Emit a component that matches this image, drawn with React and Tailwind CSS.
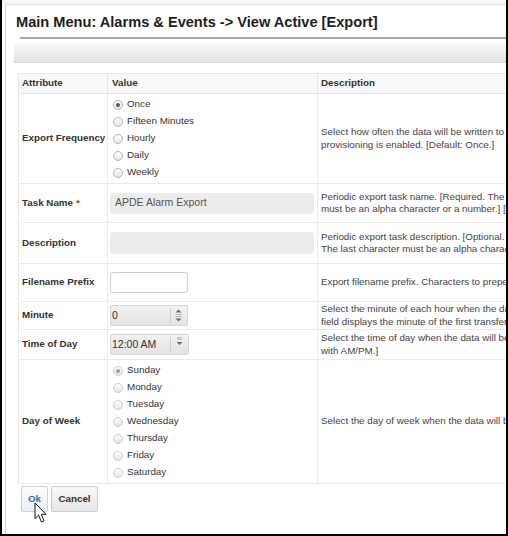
import { useState } from 'react'

const frequencies = ['Once', 'Fifteen Minutes', 'Hourly', 'Daily', 'Weekly']
const weekDays = ['Sunday', 'Monday', 'Tuesday', 'Wednesday', 'Thursday', 'Friday', 'Saturday']

function Radio({ label, checked, onChange, muted }) {
  return (
    <label className="flex items-center h-[17px] gap-[4px] cursor-default" onClick={onChange}>
      <span
        className={`w-[10px] h-[10px] rounded-full border flex items-center justify-center bg-gradient-to-b from-white to-[#e4e4e4] ${
          muted ? 'border-[#cfcfcf]' : 'border-[#b4b4b4]'
        }`}
      >
        {checked && <span className={`w-[4px] h-[4px] rounded-full ${muted ? 'bg-[#9a9a9a]' : 'bg-[#555]'}`} />}
      </span>
      <span className="text-[#333]">{label}</span>
    </label>
  )
}

function Row({ label, required, height, children, desc }) {
  return (
    <div className="grid grid-cols-[89px_210px_420px] border-b border-[#ebebeb]" style={{ height }}>
      <div className="border-r border-[#ebebeb] pl-[3px] flex items-center font-bold text-[#333]">
        {label}
        {required && <span className="ml-[3px] text-[#c0392b]">*</span>}
      </div>
      <div className="border-r border-[#ebebeb] pl-[2px] flex items-center">{children}</div>
      <div className="pl-[3px] flex flex-col justify-center leading-[12.5px] text-[#444] whitespace-nowrap">
        {desc.map((line, i) => (
          <div key={i}>{line}</div>
        ))}
      </div>
    </div>
  )
}

function Spinner() {
  return (
    <div className="w-[78px] h-[21px] flex items-center rounded-[2px] border border-[#d6d6d6] bg-gradient-to-b from-[#f2f2f2] to-[#e3e3e3]">
      <span className="flex-1 pl-[1px] text-[10.5px] text-[#333]">0</span>
      <span className="w-px h-[15px] bg-[#cfcfcf]" />
      <svg width="15" height="17" viewBox="0 0 15 17" className="mr-[1px]">
        <path d="M4.5 5.5 L7.5 2.5 L10.5 5.5 Z" fill="#6b6b6b" />
        <rect x="4.5" y="7" width="6" height="1" fill="#b5b5b5" />
        <rect x="4.5" y="9" width="6" height="1" fill="#b5b5b5" />
        <path d="M4.5 11.5 L7.5 14.5 L10.5 11.5 Z" fill="#6b6b6b" />
      </svg>
    </div>
  )
}

function TimeSelect() {
  return (
    <div className="w-[79px] h-[21px] flex items-center rounded-[2px] border border-[#d6d6d6] bg-gradient-to-b from-[#f2f2f2] to-[#e3e3e3]">
      <span className="flex-1 pl-[1px] text-[10.5px] text-[#333]">12:00 AM</span>
      <span className="w-px h-[15px] bg-[#cfcfcf]" />
      <svg width="17" height="17" viewBox="0 0 17 17">
        <rect x="6" y="1" width="5" height="3" fill="#c9c9c9" />
        <path d="M5.5 6 L8.5 9 L11.5 6 Z" fill="#6b6b6b" />
      </svg>
    </div>
  )
}

function Cursor() {
  return (
    <svg width="14" height="22" viewBox="0 0 14 22" className="absolute left-[32px] top-[502px]">
      <path
        d="M1 1 L1 16.5 L4.6 13.2 L7.4 20 L10 18.9 L7.3 12.3 L12 12.3 Z"
        fill="#fff"
        stroke="#111"
        strokeWidth="1"
        strokeLinejoin="round"
      />
    </svg>
  )
}

export default function App() {
  const [freq, setFreq] = useState('Once')
  const [day, setDay] = useState('Sunday')

  return (
    <div className="relative w-[508px] h-[536px] overflow-hidden bg-white border-l-2 border-r-2 border-b-2 border-black font-['Liberation_Sans',Arial,sans-serif] text-[9.8px]">
      <div className="h-[4px] bg-[#f5f5f5]" />
      <div className="ml-[3px] h-full border-l border-t border-l-[#d2d2d2] border-t-[#d6e2ee]">
        <h1 className="pl-[10px] pt-[7px] leading-[20px] text-[14.6px] font-bold text-[#1e1e1e]">
          Main Menu: Alarms &amp; Events -&gt; View Active [Export]
        </h1>
        <div className="mt-[5px] ml-[14px] h-[2px] bg-[#a8a8a8]" />
        <div className="mt-[4px] ml-[8px] h-[20px] bg-gradient-to-b from-[#fafafa] to-[#e2e2e2] border-b border-[#d8d8d8]" />

        <div className="mt-[10px] ml-[12px] w-[720px] border-l border-t border-[#e3e6ea]">
          <div className="grid grid-cols-[89px_210px_420px] h-[20px] bg-[#f8f9fa] border-b border-[#dfe4ea] font-bold text-[#333]">
            <div className="border-r border-[#e3e6ea] pl-[3px] flex items-center">Attribute</div>
            <div className="border-r border-[#e3e6ea] pl-[4px] flex items-center">Value</div>
            <div className="pl-[3px] flex items-center">Description</div>
          </div>

          <Row
            label="Export Frequency"
            height={90}
            desc={[
              'Select how often the data will be written to the export file when',
              'provisioning is enabled. [Default: Once.]',
            ]}
          >
            <div className="pl-[3px] flex flex-col">
              {frequencies.map((f) => (
                <Radio key={f} label={f} checked={freq === f} onChange={() => setFreq(f)} />
              ))}
            </div>
          </Row>

          <Row
            label="Task Name"
            required
            height={39}
            desc={[
              'Periodic export task name. [Required. The first and last character',
              <>
                must be an alpha character or a number.] [<span className="text-[#2f6fb7]">Allowed characters</span>
              </>,
            ]}
          >
            <div className="w-[204px] h-[21px] rounded-[3px] bg-[#ececec] pl-[5px] flex items-center text-[10.5px] text-[#555]">
              APDE Alarm Export
            </div>
          </Row>

          <Row
            label="Description"
            height={41}
            desc={[
              'Periodic export task description. [Optional. The first character',
              'The last character must be an alpha character or a number.]',
            ]}
          >
            <div className="w-[204px] h-[22px] rounded-[3px] bg-[#ececec]" />
          </Row>

          <Row
            label="Filename Prefix"
            height={38}
            desc={['Export filename prefix. Characters to prepend to the file name.']}
          >
            <div className="w-[78px] h-[21px] rounded-[3px] bg-white border border-[#cfcfcf]" />
          </Row>

          <Row
            label="Minute"
            height={28}
            desc={[
              'Select the minute of each hour when the data will be exported. This',
              'field displays the minute of the first transfer.]',
            ]}
          >
            <Spinner />
          </Row>

          <Row
            label="Time of Day"
            height={30}
            desc={['Select the time of day when the data will be exported. [Format: hh:mm', 'with AM/PM.]']}
          >
            <TimeSelect />
          </Row>

          <Row label="Day of Week" height={124} desc={['Select the day of week when the data will be exported.']}>
            <div className="pl-[3px] flex flex-col">
              {weekDays.map((d) => (
                <Radio key={d} label={d} muted checked={day === d} onChange={() => setDay(d)} />
              ))}
            </div>
          </Row>
        </div>

        <div className="mt-[2px] ml-[15px] flex gap-[3px]">
          <button className="w-[27px] h-[26px] rounded-[2px] border border-[#c9d3de] bg-gradient-to-b from-[#fbfcfd] to-[#eceff2] font-bold text-[#2f6fb7]">
            Ok
          </button>
          <button className="w-[47px] h-[26px] rounded-[2px] border border-[#cdcdcd] bg-gradient-to-b from-[#f8f8f8] to-[#e6e6e6] font-bold text-[#333]">
            Cancel
          </button>
        </div>
      </div>
      <Cursor />
    </div>
  )
}
